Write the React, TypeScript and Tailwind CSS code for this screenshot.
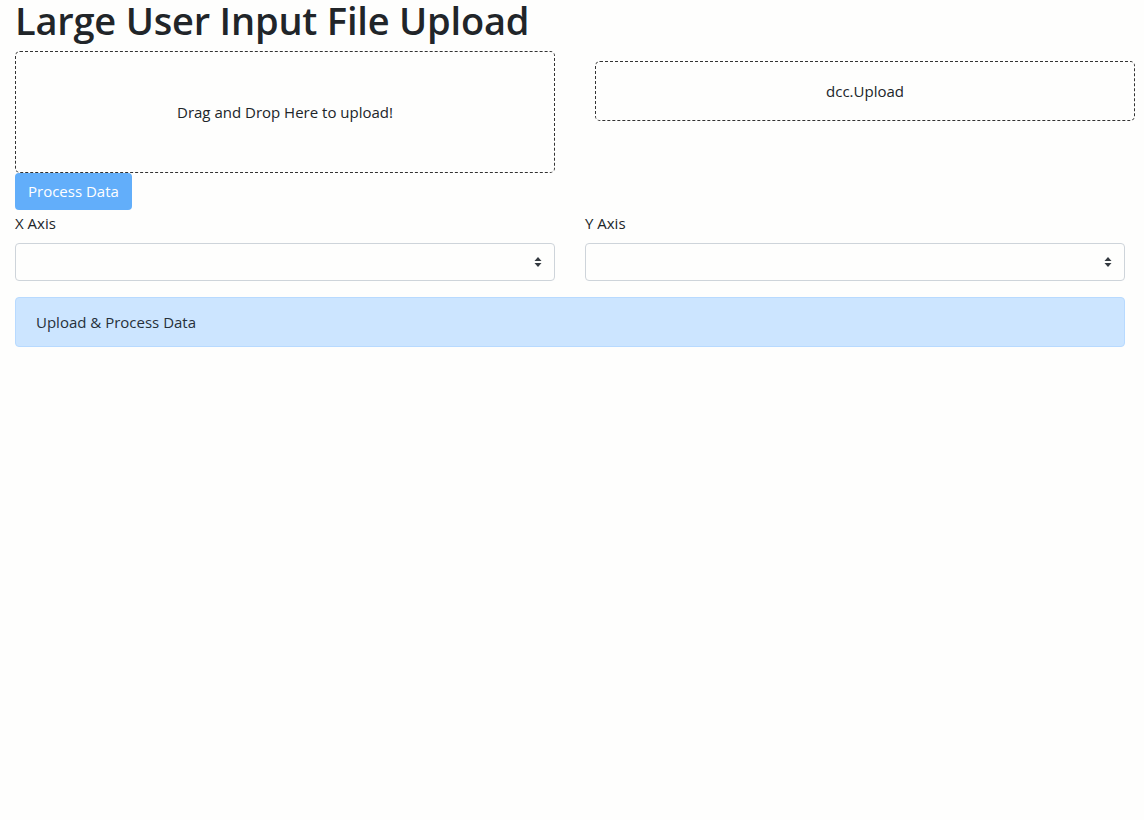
export default function App() {
  return (
    <div
      className="min-h-[820px] w-full bg-[#fefefd] text-[16px] text-[#212529]"
      style={{ fontFamily: '"Open Sans", "Noto Sans", sans-serif' }}
    >
      <div className="w-[1140px] px-[15px]">
        <h1 className="h-[51px] text-[38px] font-semibold leading-[40px] tracking-[-0.2px] text-[#212529]">
          Large User Input File Upload
        </h1>

        <div className="-mx-[15px] flex">
          <div className="w-1/2 px-[15px]">
            <div className="flex h-[122px] items-center justify-center rounded-[5px] border border-dashed border-[#333] text-[15px]">
              Drag and Drop Here to upload!
            </div>
          </div>
          <div className="w-1/2 px-[15px]">
            <div className="my-[10px] ml-[10px] flex h-[60px] w-full items-center justify-center rounded-[5px] border border-dashed border-[#333] text-[15px]">
              dcc.Upload
            </div>
          </div>
        </div>

        <button className="h-[37px] rounded-[4px] bg-[#62aefa] px-[13px] text-[15px] text-white">
          Process Data
        </button>

        <div className="-mx-[15px] flex">
          <div className="w-1/2 px-[15px]">
            <label className="block h-[33px] text-[15px] leading-[26px]">X Axis</label>
            <Select />
          </div>
          <div className="w-1/2 px-[15px]">
            <label className="block h-[33px] text-[15px] leading-[26px]">Y Axis</label>
            <Select />
          </div>
        </div>

        <div className="mt-[16px] flex h-[50px] items-center rounded-[4px] border border-[#b8daff] bg-[#cce5ff] px-[20px] text-[15px] text-[#26303a]">
          Upload &amp; Process Data
        </div>
      </div>
    </div>
  );
}

function Select() {
  return (
    <div className="flex h-[38px] items-center justify-end rounded-[4px] border border-[#ced4da] bg-[#fefefd] pr-[12px]">
      <svg width="8" height="12" viewBox="0 0 8 12">
        <path d="M4 1 L7.5 5 L0.5 5 Z" fill="#343a40" />
        <path d="M4 11 L7.5 7 L0.5 7 Z" fill="#343a40" />
      </svg>
    </div>
  );
}
